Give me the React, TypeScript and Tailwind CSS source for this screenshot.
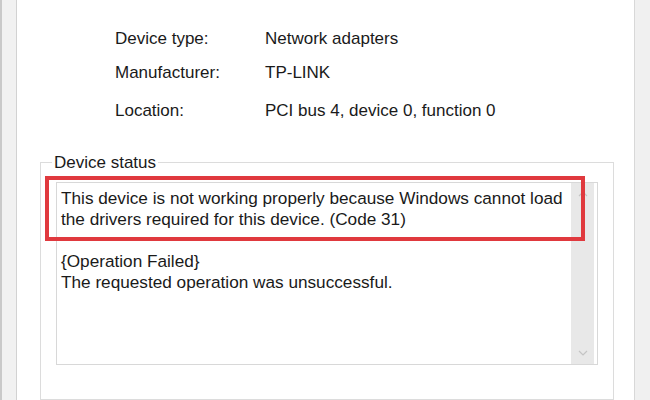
import React from "react";

export default function App() {
  const font = { fontFamily: '"Liberation Sans", Arial, sans-serif' };
  return (
    <div
      className="relative flex w-[650px] h-[400px] overflow-hidden bg-white text-[17px] text-[#1a1a1a]"
      style={font}
    >
      {/* left window edge */}
      <div className="flex w-[17px] h-full shrink-0">
        <div className="w-[2px] h-full bg-[#c9c9c9]" />
        <div className="flex-1 h-full bg-[#f1f1f1] border-r border-[#d2d2d2]" />
      </div>

      {/* main content */}
      <div className="flex-1 flex flex-col h-full">
        {/* properties */}
        <div className="pl-[98px] pt-[29px] leading-[19px]">
          <div className="flex h-[34px]">
            <div className="w-[150px]">Device type:</div>
            <div>Network adapters</div>
          </div>
          <div className="flex h-[38px]">
            <div className="w-[150px]">Manufacturer:</div>
            <div>TP-LINK</div>
          </div>
          <div className="flex h-[19px]">
            <div className="w-[150px]">Location:</div>
            <div>PCI bus 4, device 0, function 0</div>
          </div>
        </div>

        {/* group box */}
        <fieldset className="mt-[33px] ml-[23px] w-[574px] flex-1 border border-[#dcdcdc] px-[15px] pb-0">
          <legend className="ml-[-4px] px-[2px] leading-[19px]">Device status</legend>
          <div className="mt-[10px] flex h-[183px] border border-[#d8d8d8] bg-white">
            <div className="flex-1 pl-[4px] pt-[5px] leading-[21px] whitespace-nowrap text-[17.2px]">
              <div>This device is not working properly because Windows cannot load</div>
              <div>the drivers required for this device. (Code 31)</div>
              <div className="h-[21px]" />
              <div>{"{Operation Failed}"}</div>
              <div>The requested operation was unsuccessful.</div>
            </div>
            <div className="w-[23px] mr-[3px] h-full bg-[#e8e8e8] flex flex-col items-center justify-between py-[8px]">
              <svg width="10" height="6" viewBox="0 0 10 6">
                <path d="M1 5 L5 1 L9 5" fill="none" stroke="#c4c4c4" strokeWidth="1.2" />
              </svg>
              <svg width="10" height="6" viewBox="0 0 10 6">
                <path d="M1 1 L5 5 L9 1" fill="none" stroke="#c4c4c4" strokeWidth="1.2" />
              </svg>
            </div>
          </div>
        </fieldset>
      </div>

      {/* right window edge */}
      <div className="w-[16px] h-full shrink-0 bg-[#f0f0f0] border-l border-[#d8d8d8]" />

      {/* red annotation */}
      <div className="absolute left-[45px] top-[176px] w-[540px] h-[65px] border-[4px] border-[#e0393e]" />
    </div>
  );
}
